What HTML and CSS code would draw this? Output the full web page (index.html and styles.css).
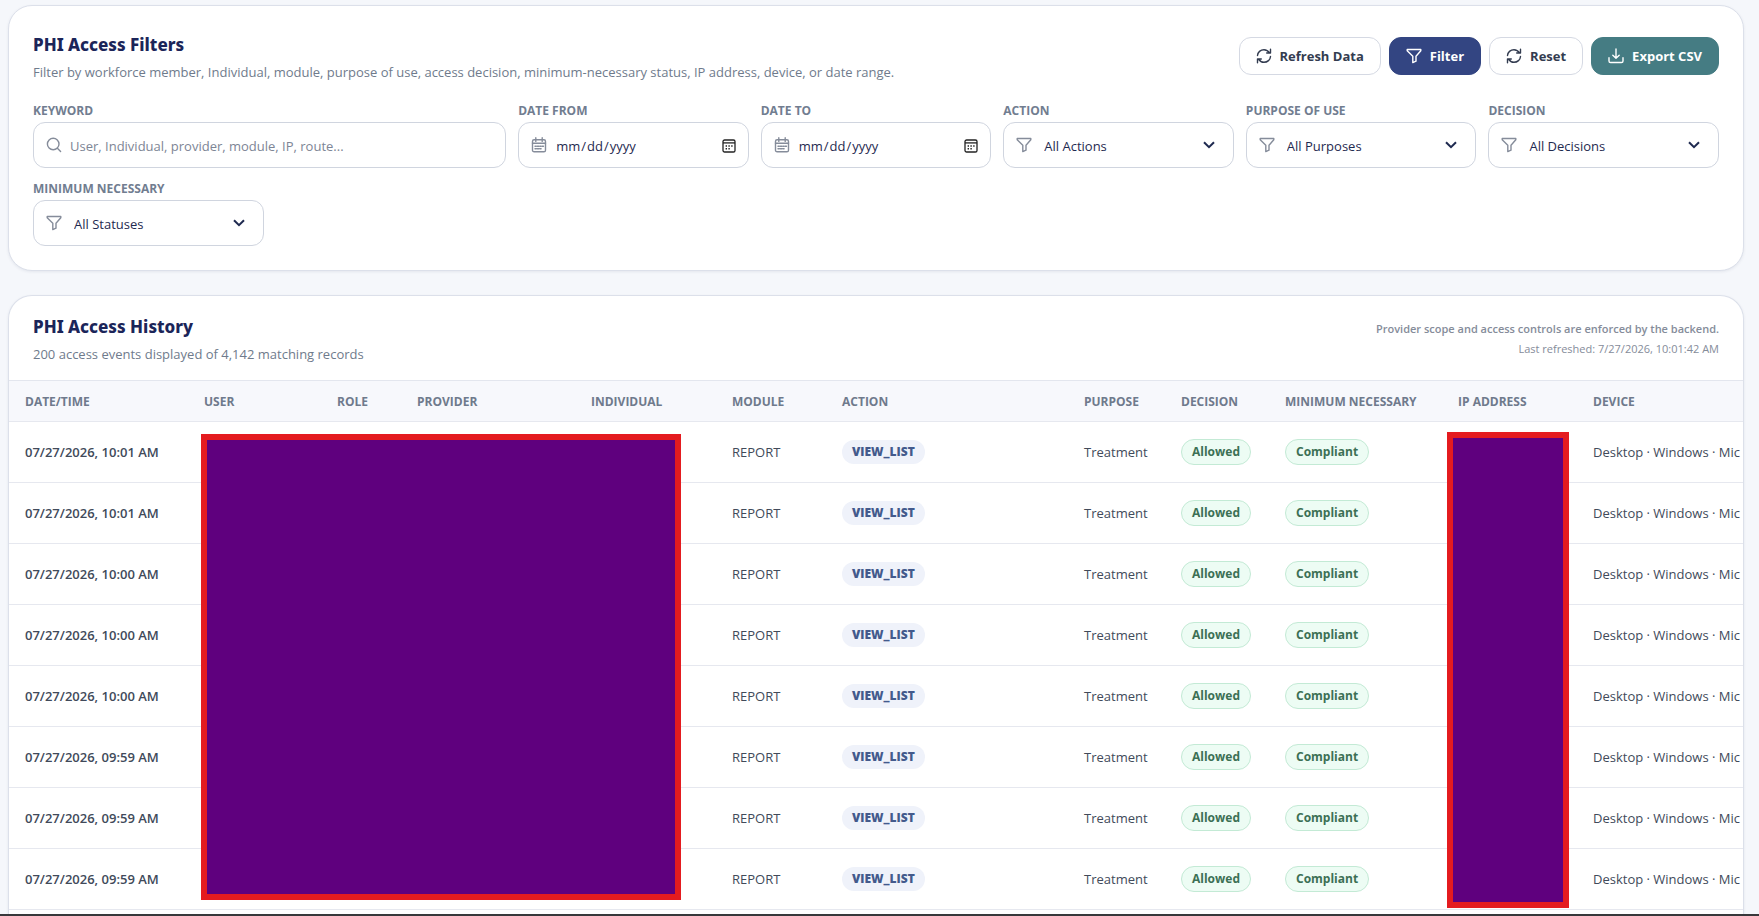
FILE: index.html
```html
<!DOCTYPE html>
<html lang="en">
<head>
  <meta charset="UTF-8" />
  <meta name="viewport" content="width=device-width, initial-scale=1.0" />
  <title>PHI Access</title>
  <link rel="stylesheet" href="styles.css">
</head>
<body>
  <!-- shared icons -->
  <svg class="sprite" aria-hidden="true">
    <symbol id="i-funnel" viewBox="0 0 16 16"><path d="M1.2 1.5h13.6v1.3L10 8.2v5L6.8 14.6V8.2L1.2 2.8z"/></symbol>
    <symbol id="i-refresh" viewBox="0 0 16 16"><path d="M1.5 7.5C1.7 4.2 4.5 1.7 8 1.7c2.4 0 4.2 1.2 5.6 3.3M14.5 1.3V5h-3.8M14.5 8.5c-.2 3.3-3 5.8-6.5 5.8-2.4 0-4.2-1.2-5.6-3.3M1.5 14.7V11h3.8"/></symbol>
    <symbol id="i-download" viewBox="0 0 16 16"><path d="M8 1v9.2M4.8 7.2L8 10.3l3.2-3.1M1 9.8v3.1c0 1 .6 1.6 1.6 1.6h10.8c1 0 1.6-.6 1.6-1.6V9.8"/></symbol>
    <symbol id="i-search" viewBox="0 0 16 16"><circle cx="7.2" cy="7" r="5.8"/><path d="M11.4 11.2l3.2 3.2"/></symbol>
    <symbol id="i-calendar" viewBox="0 0 16 16"><rect x="1.5" y="2.8" width="13" height="12" rx="1.6"/><path d="M1.5 6.3h13M4.8 .8v3.6M11.2 .8v3.6"/><path d="M4 9.2h1.3M6.4 9.2h1.3M8.8 9.2h1.3M11.2 9.2h1.3M4 11.8h1.3M6.4 11.8h1.3M8.8 11.8h1.3"/></symbol>
    <symbol id="i-chevron" viewBox="0 0 12 8"><path d="M1 1.2l5 5 5-5"/></symbol>
  </svg>

  <main class="page">
    <section class="card filters">
      <div class="card-head">
        <div>
          <h2>PHI Access Filters</h2>
          <p class="sub">Filter by workforce member, Individual, module, purpose of use, access decision, minimum-necessary status, IP address, device, or date range.</p>
        </div>
        <div class="actions">
          <button type="button" class="btn"><svg class="icon"><use href="#i-refresh"/></svg>Refresh Data</button>
          <button type="submit" form="filter-form" class="btn btn-primary"><svg class="icon"><use href="#i-funnel"/></svg>Filter</button>
          <button type="reset" form="filter-form" class="btn"><svg class="icon"><use href="#i-refresh"/></svg>Reset</button>
          <button type="button" class="btn btn-export"><svg class="icon"><use href="#i-download"/></svg>Export CSV</button>
        </div>
      </div>

      <form id="filter-form" class="filter-grid">
        <div class="field wide">
          <label for="keyword">Keyword</label>
          <div class="control">
            <svg class="icon"><use href="#i-search"/></svg>
            <input type="text" id="keyword" placeholder="User, Individual, provider, module, IP, route...">
          </div>
        </div>
        <div class="field">
          <label for="date-from">Date From</label>
          <div class="control">
            <svg class="icon"><use href="#i-calendar"/></svg>
            <input type="date" id="date-from">
          </div>
        </div>
        <div class="field">
          <label for="date-to">Date To</label>
          <div class="control">
            <svg class="icon"><use href="#i-calendar"/></svg>
            <input type="date" id="date-to">
          </div>
        </div>
        <div class="field">
          <label for="action">Action</label>
          <div class="control">
            <svg class="icon"><use href="#i-funnel"/></svg>
            <select id="action"><option>All Actions</option></select>
            <svg class="chevron"><use href="#i-chevron"/></svg>
          </div>
        </div>
        <div class="field">
          <label for="purpose">Purpose of Use</label>
          <div class="control">
            <svg class="icon"><use href="#i-funnel"/></svg>
            <select id="purpose"><option>All Purposes</option></select>
            <svg class="chevron"><use href="#i-chevron"/></svg>
          </div>
        </div>
        <div class="field">
          <label for="decision">Decision</label>
          <div class="control">
            <svg class="icon"><use href="#i-funnel"/></svg>
            <select id="decision"><option>All Decisions</option></select>
            <svg class="chevron"><use href="#i-chevron"/></svg>
          </div>
        </div>
        <div class="field">
          <label for="minimum">Minimum Necessary</label>
          <div class="control">
            <svg class="icon"><use href="#i-funnel"/></svg>
            <select id="minimum"><option>All Statuses</option></select>
            <svg class="chevron"><use href="#i-chevron"/></svg>
          </div>
        </div>
      </form>
    </section>

    <section class="card history">
      <div class="card-head">
        <div>
          <h2>PHI Access History</h2>
          <p class="sub">200 access events displayed of 4,142 matching records</p>
        </div>
        <div class="notes">
          <p class="scope">Provider scope and access controls are enforced by the backend.</p>
          <p>Last refreshed: 7/27/2026, 10:01:42 AM</p>
        </div>
      </div>

      <div class="table-wrap">
        <table>
          <colgroup>
            <col class="c-date"><col class="c-user"><col class="c-role"><col class="c-provider">
            <col class="c-individual"><col class="c-module"><col class="c-action"><col class="c-purpose">
            <col class="c-decision"><col class="c-minimum"><col class="c-ip"><col class="c-device">
          </colgroup>
          <thead>
            <tr>
              <th>Date/Time</th><th>User</th><th>Role</th><th>Provider</th><th>Individual</th><th>Module</th>
              <th>Action</th><th>Purpose</th><th>Decision</th><th>Minimum Necessary</th><th>IP Address</th><th>Device</th>
            </tr>
          </thead>
          <tbody id="rows"></tbody>
        </table>
        <div class="redacted redacted-person"></div>
        <div class="redacted redacted-ip"></div>
      </div>
    </section>
  </main>
  <div class="bottom-bar"></div>

  <script>
    var times = ['10:01', '10:01', '10:00', '10:00', '10:00', '09:59', '09:59', '09:59'];
    var rows = document.getElementById('rows');
    times.forEach(function (time) {
      var tr = document.createElement('tr');
      tr.innerHTML = `<td class="when">07/27/2026, ${time} AM</td>
        <td></td><td></td><td></td><td></td>
        <td>REPORT</td>
        <td><span class="tag">VIEW_LIST</span></td>
        <td>Treatment</td>
        <td><span class="pill">Allowed</span></td>
        <td><span class="pill">Compliant</span></td>
        <td></td>
        <td>Desktop · Windows · Mic</td>`;
      rows.appendChild(tr);
    });
  </script>
</body>
</html>
```
FILE: styles.css
```css
* {
  margin: 0;
  padding: 0;
  box-sizing: border-box;
}

body {
  display: flex;
  flex-direction: column;
  height: 100vh;
  overflow: hidden;
  background: #f5f7fb;
  color: #414a5a;
  font-family: "Open Sans", "Noto Sans", sans-serif;
  font-size: 13px;
  line-height: 20px;
}

.sprite {
  position: absolute;
  width: 0;
  height: 0;
}

.page {
  flex: 1;
  min-height: 0;
  display: flex;
  flex-direction: column;
  gap: 24px;
  padding: 5px 15px 0 8px;
}

.card {
  background: #fff;
  border: 1px solid #dce0ea;
  border-radius: 24px;
  box-shadow: 0 1px 3px rgba(30, 41, 80, 0.08);
}

.card-head {
  display: flex;
  justify-content: space-between;
  align-items: center;
  gap: 16px;
}

h2 {
  margin-bottom: 2px;
  color: #1b2559;
  font-family: "Noto Sans", sans-serif;
  font-size: 17px;
  font-weight: 800;
  line-height: 30px;
}

.sub {
  color: #6f7b8c;
}

/* filters */
.filters {
  padding: 24px;
}

.filters .card-head {
  margin-bottom: 20px;
}

.actions {
  display: flex;
  gap: 8px;
}

.btn {
  display: flex;
  align-items: center;
  gap: 8px;
  height: 38px;
  padding: 0 16px;
  border: 1px solid #d5d9e3;
  border-radius: 12px;
  background: #fff;
  color: #333c50;
  font-family: inherit;
  font-size: 13px;
  font-weight: 700;
  white-space: nowrap;
}

.btn-primary {
  border-color: #334582;
  background: #334582;
  color: #fff;
}

.btn-export {
  border-color: #457c83;
  background: #457c83;
  color: #fff;
}

.icon {
  flex: none;
  width: 16px;
  height: 16px;
  fill: none;
  stroke: currentColor;
  stroke-width: 1.4;
  stroke-linecap: round;
  stroke-linejoin: round;
}

.filter-grid {
  display: grid;
  grid-template-columns: repeat(7, 1fr);
  gap: 12px;
}

.wide {
  grid-column: span 2;
}

.field label {
  display: block;
  margin-bottom: 2px;
  color: #717d90;
  font-size: 12px;
  font-weight: 700;
  line-height: 18px;
  text-transform: uppercase;
}

.control {
  position: relative;
  display: flex;
  align-items: center;
  gap: 8px;
  height: 46px;
  padding: 0 12px;
  border: 1px solid #d0d5df;
  border-radius: 12px;
  background: #fff;
  color: #858c9a;
}

.control input,
.control select {
  flex: 1;
  min-width: 0;
  height: 44px;
  padding-top: 2px;
  border: 0;
  outline: 0;
  background: transparent;
  color: #1f2a50;
  font-family: inherit;
  font-size: 13px;
}

.control select {
  appearance: none;
  padding-left: 4px;
}

.control input::placeholder {
  color: #7d8595;
}

.control input::-webkit-calendar-picker-indicator {
  width: 14px;
  height: 14px;
  padding: 0;
  background: url("data:image/svg+xml,%3Csvg xmlns='http://www.w3.org/2000/svg' viewBox='0 0 14 14' fill='none' stroke='%23222' stroke-width='1.3'%3E%3Crect x='1' y='1' width='12' height='12' rx='1.6'/%3E%3Cpath d='M1 3.9h12'/%3E%3Cpath d='M6.4 7h1.4M9.2 7h1.4M3.6 7h1.4M3.6 9.8h1.4M6.4 9.8h1.4' stroke-width='1.5'/%3E%3C/svg%3E") center / 14px 14px no-repeat;
}

.chevron {
  position: absolute;
  right: 18px;
  width: 12px;
  height: 8px;
  fill: none;
  stroke: #1f2a50;
  stroke-width: 2;
  pointer-events: none;
}

/* history */
.history {
  flex: 1;
  min-height: 0;
  overflow: hidden;
  border-bottom: 0;
  border-radius: 24px 24px 0 0;
}

.history .card-head {
  padding: 16px 24px;
}

.notes {
  padding-top: 2px;
  color: #858c9a;
  font-size: 11px;
  text-align: right;
}

.scope {
  font-weight: 600;
}

.table-wrap {
  position: relative;
  overflow: hidden;
  border-top: 1px solid #e3e6ee;
}

table {
  width: 1800px;
  table-layout: fixed;
  border-collapse: separate;
  border-spacing: 0;
}

.c-date { width: 179px; }
.c-user { width: 133px; }
.c-role { width: 80px; }
.c-provider { width: 174px; }
.c-individual { width: 141px; }
.c-module { width: 110px; }
.c-action { width: 242px; }
.c-purpose { width: 97px; }
.c-decision { width: 104px; }
.c-minimum { width: 173px; }
.c-ip { width: 135px; }

th,
td {
  padding: 0 16px;
  border-bottom: 1px solid #e6e8ef;
  text-align: left;
  white-space: nowrap;
}

th {
  height: 41px;
  padding-top: 2px;
  background: #f7f8fc;
  color: #6f7a8c;
  font-size: 12px;
  font-weight: 700;
  text-transform: uppercase;
}

td {
  height: 61px;
}

.when {
  font-weight: 600;
}

.tag,
.pill {
  display: inline-block;
  padding: 2px 10px;
  border-radius: 13px;
  font-size: 12px;
  font-weight: 700;
}

.tag {
  background: #eff2fa;
  color: #435a8c;
  font-weight: 800;
}

.pill {
  border: 1px solid #c3ead5;
  background: #edfcf4;
  color: #3c7055;
}

.redacted {
  position: absolute;
  border: 6px solid #e41b1f;
  background: #5f007e;
}

.redacted-person {
  top: 53px;
  left: 192px;
  width: 480px;
  height: 466px;
}

.redacted-ip {
  top: 51px;
  left: 1438px;
  width: 122px;
  height: 476px;
}

.bottom-bar {
  flex: none;
  height: 2px;
  background: #38383b;
}
```
